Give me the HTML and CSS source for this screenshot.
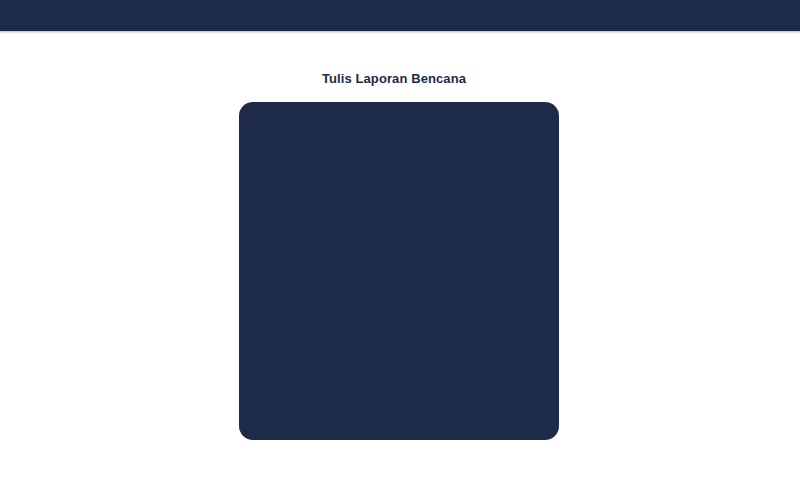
FILE: index.html
```html
<!DOCTYPE html>
<html>
<head>
<meta charset="utf-8">
<link rel="stylesheet" href="styles.css">
</head>
<body>
<header class="topbar"></header>
<main class="content">
  <h1 class="title">Tulis Laporan Bencana</h1>
  <div class="card"></div>
</main>
</body>
</html>
```
FILE: styles.css
```css
* { box-sizing: border-box; }
body {
  margin: 0;
  background: #ffffff;
  font-family: "Liberation Sans", Arial, sans-serif;
}
.topbar {
  height: 31px;
  background: #1e2b48;
  box-shadow: 0 1px 2px rgba(30, 43, 72, 0.35);
}
.content {
  display: flex;
  flex-direction: column;
  align-items: center;
  padding: 40px 80px 0 78px;
}
.title {
  margin: 0 10px 0 0;
  font-size: 13px;
  font-weight: 700;
  letter-spacing: 0.1px;
  color: #1e2b48;
  line-height: 16px;
}
.card {
  margin-top: 15px;
  width: 320px;
  height: 338px;
  background: #1e2b48;
  border-radius: 14px;
}
```
